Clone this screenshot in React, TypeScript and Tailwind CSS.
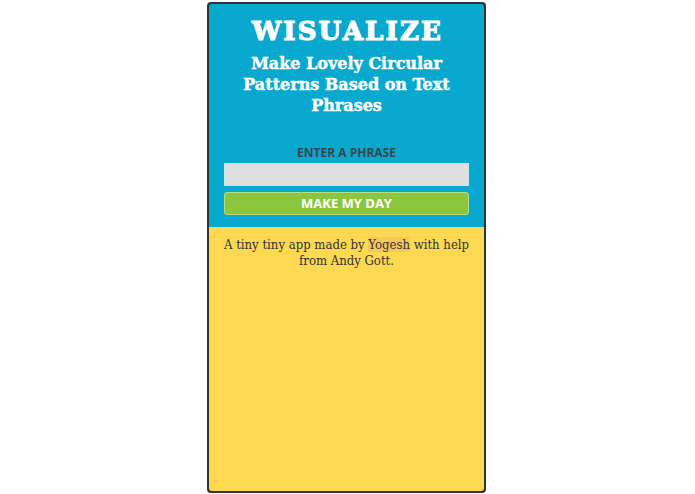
import React from "react";

export default function App() {
  const slab = { fontFamily: '"DejaVu Serif", "Liberation Serif", serif' };
  const slabCond = {
    fontFamily: '"DejaVu Serif Condensed", "DejaVu Serif", "Liberation Serif", serif',
    fontStretch: "condensed",
  };
  const sans = { fontFamily: '"Open Sans", "Liberation Sans", sans-serif' };
  return (
    <div className="w-[695px] h-[494px] bg-white">
      <div className="ml-[207px] pt-[2px]">
        <div className="w-[279px] h-[491px] bg-[#333333] rounded-[4px] p-[2px] flex flex-col">
          <div className="flex-1 rounded-[3px] overflow-hidden flex flex-col">
            <div className="h-[223px] bg-[#09a8ce] flex flex-col items-center px-[15px]">
              <div
                className="mt-[12px] text-white font-bold text-[26px] leading-[30px] tracking-[2.2px] pl-[2px] [-webkit-text-stroke:1.2px_white]"
                style={slab}
              >
                WISUALIZE
              </div>
              <div
                className="mt-[7px] text-white font-bold text-[16px] leading-[21px] text-center w-[220px] [-webkit-text-stroke:0.4px_white]"
                style={slab}
              >
                Make Lovely Circular Patterns Based on Text Phrases
              </div>
              <div
                className="mt-[29px] text-[#34474f] font-bold text-[12px] leading-[16px]"
                style={sans}
              >
                ENTER A PHRASE
              </div>
              <div className="mt-[2px] w-[245px] h-[23px] bg-[#dedede] border border-[#c9e7ef]" />
              <div
                className="mt-[6px] w-[245px] h-[23px] bg-[#8cc63f] border border-[#b7dc8a] rounded-[3px] flex items-center justify-center text-white font-bold text-[13px]"
                style={sans}
              >
                MAKE MY DAY
              </div>
            </div>
            <div className="flex-1 bg-[#fdd951] flex flex-col items-center pt-[10px]">
              <p
                className="text-[#333333] text-[13px] leading-[16px] text-center w-[262px]"
                style={slabCond}
              >
                A tiny tiny app made by{" "}
                <span className="bg-[#f6c85a]">Yogesh</span> with help from Andy Gott.
              </p>
            </div>
          </div>
        </div>
      </div>
    </div>
  );
}
